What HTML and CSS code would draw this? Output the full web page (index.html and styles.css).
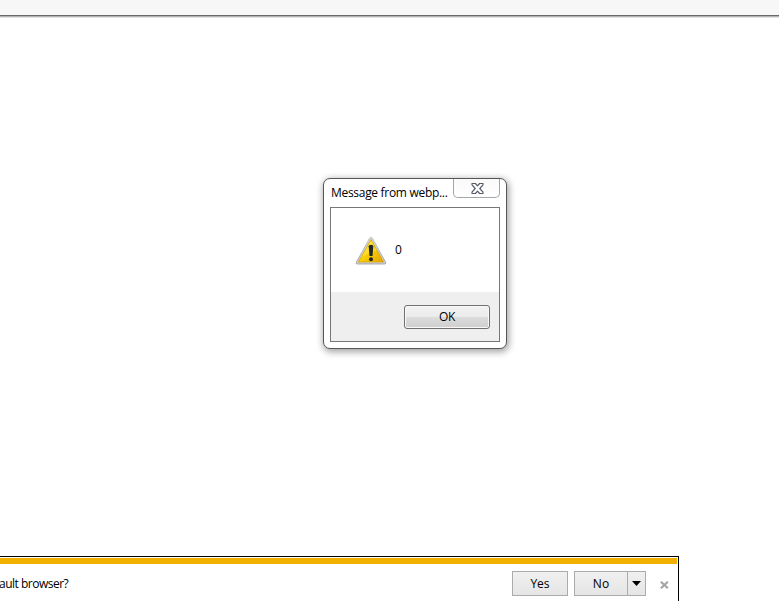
FILE: index.html
```
<!DOCTYPE html>
<html lang="en">
<head>
<meta charset="utf-8">
<title>Browser</title>
<link rel="stylesheet" href="styles.css">
</head>
<body>
<div class="window">
  <header class="toolbar"></header>
  <main class="page">
    <section class="dialog" role="alertdialog">
      <div class="titlebar">
        <span class="title">Message from webp...</span>
        <button class="close" aria-label="Close">
          <svg width="13" height="11" viewBox="0 0 13 11"><path d="M1 .5h3.400l2.100 2.300L8.600.5H12v1.300L8.800 5.500 12 9.200v1.300H8.600L6.500 8.200 4.400 10.500H1V9.200l3.200-3.700L1 1.800z" fill="#fff" stroke="#555a68" stroke-width="1.150" stroke-linejoin="round"/></svg>
        </button>
      </div>
      <div class="client">
        <div class="message">
          <svg class="warning" width="32" height="29" viewBox="0 0 32 29">
            <defs>
              <linearGradient id="gold" x1="0" y1="0" x2="1" y2="1"><stop offset="0" stop-color="#fff04a"/><stop offset=".5" stop-color="#f8cf08"/><stop offset="1" stop-color="#e5a300"/></linearGradient>
              <linearGradient id="rim" x1="0" y1="0" x2="0" y2="1"><stop offset="0" stop-color="#bfc1c3"/><stop offset="1" stop-color="#8f9498"/></linearGradient>
            </defs>
            <path d="M16 1.200q1 0 1.600 1.200l13 23.800q.9 1.800-1 1.800H2.400q-1.900 0-1-1.800l13-23.800Q15 1.200 16 1.200z" fill="#d0d2d3" stroke="url(#rim)" stroke-width=".8"/>
            <path d="M16 3.600L28.700 26H3.300z" fill="url(#gold)" stroke="#d99c00" stroke-width=".7"/>
            <path d="M16 4.500L22 15Q15 15 6.500 21.500z" fill="#fff36a" opacity=".35"/>
            <path d="M13.700 10.200q0-1.500 2.300-1.500t2.300 1.500L17.500 20h-3z" fill="#242622"/>
            <circle cx="16" cy="23.200" r="2" fill="#242622"/>
          </svg>
          <span class="value">0</span>
        </div>
        <div class="actions"><button class="ok">OK</button></div>
      </div>
    </section>
  </main>
  <footer class="notice">
    <div class="stripe"></div>
    <div class="prompt">
      <span class="question">ault browser?</span>
      <button class="choice yes">Yes</button>
      <div class="split">
        <button class="choice no">No</button>
        <button class="choice more" aria-label="More options"><svg width="9" height="5" viewBox="0 0 9 5"><path d="M0 0h9L4.500 5z" fill="#000"/></svg></button>
      </div>
      <button class="dismiss" aria-label="Dismiss"><svg width="9" height="8" viewBox="0 0 9 8"><path d="M.9.800l7 6.400M7.900.800L.9 7.200" stroke="#a5a5a5" stroke-width="2.200"/></svg></button>
    </div>
  </footer>
</div>
</body>
</html>
```
FILE: styles.css
```
* { box-sizing: border-box; }
body {
  margin: 0;
  overflow: hidden;
  background: #fff;
  color: #000;
  font: 12px/16px "Open Sans", "Noto Sans", sans-serif;
}
button { margin: 0; padding: 0; font: inherit; color: inherit; }
svg { display: block; }
.window { display: flex; flex-direction: column; height: 601px; }
.toolbar {
  height: 18px;
  flex: none;
  background: linear-gradient(#f7f7f7 15px, #696969 15px, #696969 16px, #b4b4b4 16px, #b4b4b4 17px, #e2e2e2 17px);
}
.page { flex: 1; padding: 160px 0 0 323px; }
.dialog {
  width: 184px;
  height: 171px;
  padding: 0 6px 6px;
  display: flex;
  flex-direction: column;
  border: 1px solid #565656;
  border-radius: 7px;
  background: #fff;
  box-shadow: 1px 2px 7px 1px rgba(0, 0, 0, .36);
}
.titlebar { height: 28px; display: flex; justify-content: space-between; align-items: flex-start; }
.title { width: 122px; padding: 6px 0 0 1px; white-space: nowrap; letter-spacing: -.3px; }
.close {
  width: 47px;
  height: 19px;
  flex: none;
  display: grid;
  place-items: center;
  padding-left: 2px;
  border: 1px solid #a3a5a8;
  border-top: 0;
  border-radius: 0 0 5px 5px;
  background: linear-gradient(#fafafa, #fff);
}
.client { flex: 1; display: flex; flex-direction: column; border: 1px solid #777; }
.message { height: 84px; display: flex; align-items: flex-start; padding: 28px 0 0 24px; }
.value { margin: 6px 0 0 8px; }
.actions { flex: 1; display: flex; justify-content: flex-end; align-items: flex-start; padding: 13px 9px 0; background: #efefef; }
.ok {
  width: 86px;
  height: 24px;
  border: 1px solid #707070;
  border-radius: 3px;
  background: linear-gradient(#f2f2f2, #ebebeb 48%, #dcdcdc 50%, #cfcfcf);
  box-shadow: inset 0 0 0 1px #f8f8f8;
  letter-spacing: -.4px;
}
.notice {
  width: 679px;
  height: 45px;
  flex: none;
  padding: 1px 1px 0 0;
  border-top: 1px solid #000;
  border-right: 1px solid #000;
}
.stripe { height: 6px; background: #f2b000; }
.prompt { display: flex; align-items: flex-start; padding-top: 7px; }
.question { width: 512px; padding-top: 5px; letter-spacing: -.5px; text-indent: -1px; white-space: nowrap; }
.choice { height: 25px; border: 1px solid #ababab; background: linear-gradient(#f0f0f0, #e5e5e5); }
.yes { width: 56px; margin-right: 6px; }
.split { display: flex; }
.no { width: 53px; border-right: 0; }
.more { width: 19px; display: grid; place-items: center; }
.dismiss { margin: 10px 0 0 14px; border: 0; background: none; }
```
